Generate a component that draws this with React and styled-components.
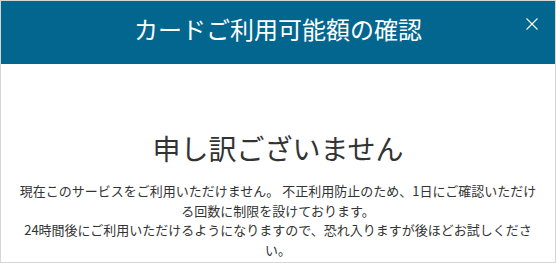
import styled, { createGlobalStyle } from 'styled-components'

const GlobalStyle = createGlobalStyle`
  html, body {
    margin: 0;
    padding: 0;
    background: #ffffff;
  }
  body {
    font-family: "Noto Sans CJK JP", "Noto Sans", sans-serif;
  }
`;

const Modal = styled.div`
  width: 556px;
  height: 263px;
  box-sizing: border-box;
  border: 1px solid #d6d6d6;
  background: #ffffff;
  overflow: hidden;
`;

const Header = styled.div`
  position: relative;
  height: 63px;
  background: #02668e;
  display: flex;
  align-items: center;
  justify-content: center;
`;

const HeaderTitle = styled.h1`
  margin: 0;
  color: #ffffff;
  font-size: 24px;
  font-weight: 400;
  line-height: 30px;
  letter-spacing: 0;
  transform: translateY(-4px);
`;

const CloseButton = styled.button`
  position: absolute;
  top: 16px;
  right: 16px;
  width: 14px;
  height: 14px;
  padding: 0;
  border: 0;
  background: none;
  cursor: pointer;
  display: flex;
  align-items: center;
  justify-content: center;
`;

const Body = styled.div`
  padding: 64px 16px 0;
  text-align: center;
  color: #333333;
`;

const Heading = styled.h2`
  margin: 0;
  font-size: 28px;
  font-weight: 400;
  line-height: 40px;
`;

const Message = styled.p`
  margin: 13px 0 0;
  font-size: 13px;
  line-height: 19.6px;
`;

function App() {
    return (
        <>
            <GlobalStyle />
            <Modal>
                <Header>
                    <HeaderTitle>カードご利用可能額の確認</HeaderTitle>
                    <CloseButton aria-label="閉じる">
                        <svg width="12" height="12" viewBox="0 0 12 12">
                            <path d="M0.5 0.5 L11.5 11.5 M11.5 0.5 L0.5 11.5" stroke="#ffffff" strokeWidth="1.1" fill="none" />
                        </svg>
                    </CloseButton>
                </Header>

                <Body>
                    <Heading>申し訳ございません</Heading>
                    <Message>
                        現在このサービスをご利用いただけません。 不正利用防止のため、1日にご確認いただける回数に制限を設けております。
                        <br />
                        24時間後にご利用いただけるようになりますので、恐れ入りますが後ほどお試しください。
                    </Message>
                </Body>
            </Modal>
        </>
    )
}

export default App
